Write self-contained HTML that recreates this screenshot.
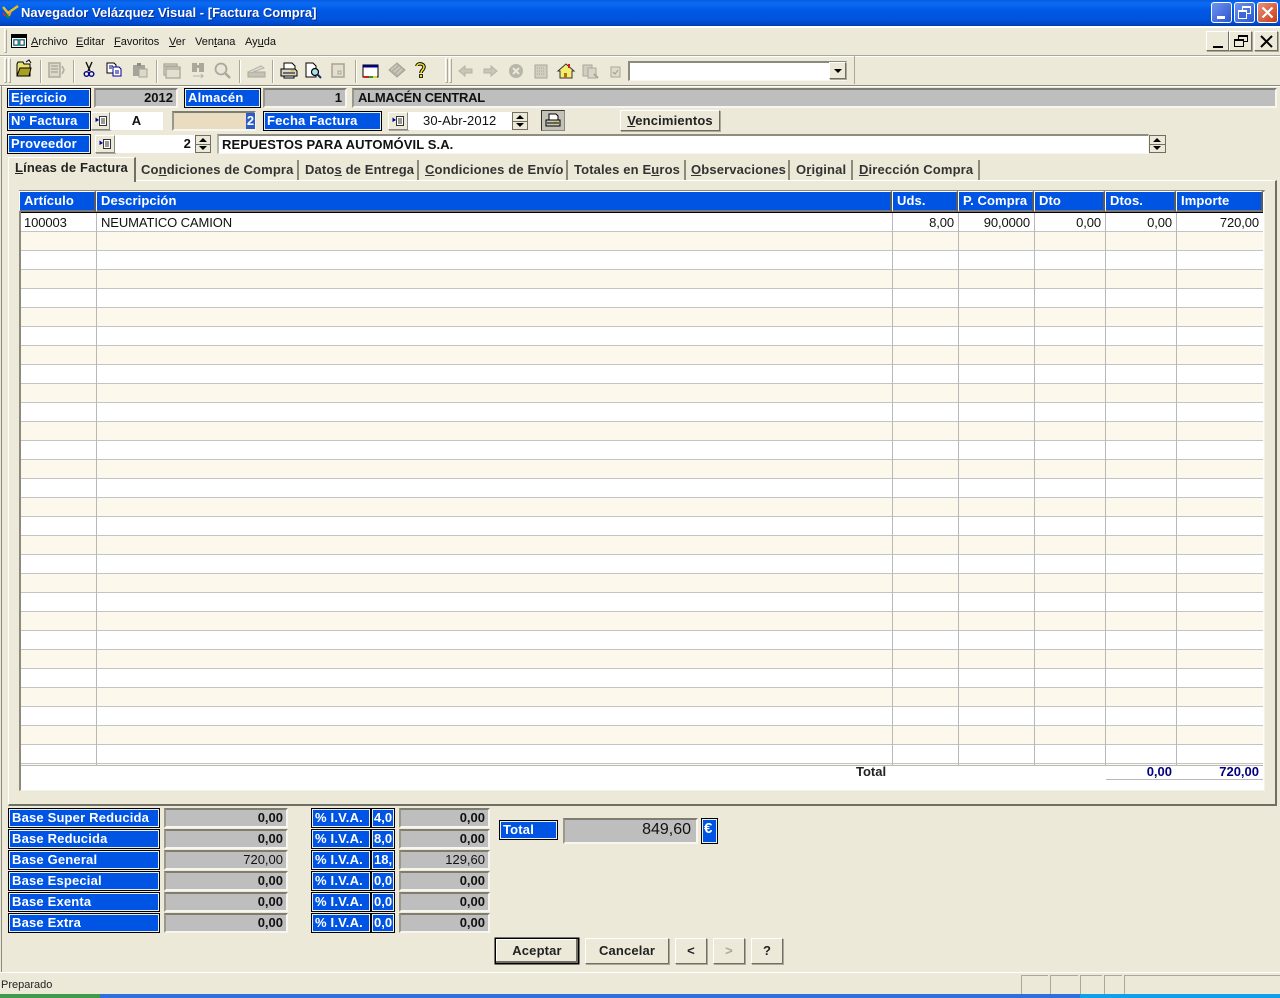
<!DOCTYPE html>
<html lang="es"><head><meta charset="utf-8"><title>Navegador Velázquez Visual</title>
<style>
html,body{margin:0;padding:0}
body{width:1280px;height:998px;position:relative;overflow:hidden;background:#ece9d8;font-family:"Liberation Sans",sans-serif;color:#000}
div,span.a,svg.a{position:absolute;box-sizing:border-box}
.t{white-space:nowrap}
u{text-decoration:underline}
.l{background:#0054e3;border:1px solid #000;box-shadow:inset 0 0 0 1px #e8eefc;color:#fff;font-weight:bold;font-size:13px;letter-spacing:.18px;line-height:18px;padding-left:3px;white-space:nowrap;height:20px}
.g{background:#bebebe;border-top:2px solid #7f7d70;border-left:2px solid #9a988a;border-right:2px solid #f8f6ee;border-bottom:2px solid #f8f6ee;font-weight:bold;font-size:13px;letter-spacing:0;text-align:right;padding-right:3px;line-height:16px;height:20px;white-space:nowrap;color:#111}
.w{background:#fff;border-top:2px solid #8f8d80;border-left:2px solid #b5b3a5;border-right:1px solid #f8f6ee;border-bottom:1px solid #f8f6ee;font-size:13px;letter-spacing:.1px;font-weight:bold;line-height:16px;white-space:nowrap;color:#111}
.b{background:#ece9d8;border:1px solid;border-color:#fff #716f64 #716f64 #fff;box-shadow:1px 1px 0 #aca899;font-weight:bold;font-size:13px;letter-spacing:.15px;text-align:center;white-space:nowrap}
.sp{background:#ece9d8;border:1px solid #716f64}
.sp:before{content:"";position:absolute;left:3px;top:2px;border:4px solid transparent;border-top:0;border-bottom:4px solid #000}
.sp:after{content:"";position:absolute;left:3px;bottom:2px;border:4px solid transparent;border-bottom:0;border-top:4px solid #000}
.sp i{position:absolute;left:0;right:0;top:50%;height:1px;background:#716f64}
.tab{top:160px;height:20px;font-size:13px;font-weight:bold;letter-spacing:.14px;color:#333;line-height:20px;white-space:nowrap;border-right:2px solid #8c8a7d}
.m{top:36px;font-size:11px;line-height:13px;white-space:nowrap;color:#111}
.sep{top:60px;width:2px;height:23px;background:#aca899;border-right:1px solid #fff}
.grip{width:3px;background:#ece9d8;border:1px solid;border-color:#fff #aca899 #aca899 #fff}
.h{top:191px;height:21px;background:#0054e3;color:#fff;font-weight:bold;font-size:13px;letter-spacing:.1px;line-height:18px;padding-left:4px;white-space:nowrap;border-top:1px solid #fff;border-left:1px solid #fff;border-right:2px solid #5a5a5a;border-bottom:2px solid #777}
.c{top:214px;font-size:13px;letter-spacing:-.1px;line-height:17px;color:#111;white-space:nowrap}
.r{text-align:right}
.v{top:213px;height:552px;width:1px;background:#b8b8b8}
.x{position:absolute}
</style></head><body>

<!-- title bar -->
<div style="left:0;top:0;width:1280px;height:26px;background:linear-gradient(180deg,#0a5ae0 0,#0a6cf2 12%,#0058e6 40%,#0053dc 75%,#0047c8 92%,#003aa8 100%)"></div>
<svg class="a" style="left:1px;top:4px" width="20" height="16" viewBox="0 0 20 16"><path d="M2 3 L7 9 L17 2" fill="none" stroke="#e8c020" stroke-width="2.4"/><path d="M2 9l3 3" stroke="#d03020" stroke-width="2"/><path d="M5 11l3 3" stroke="#109030" stroke-width="2"/><path d="M10 7l-2 5" stroke="#f0a020" stroke-width="2"/></svg>
<div class="t" style="left:21px;top:5px;color:#fff;font-weight:bold;font-size:13px;letter-spacing:.02px;line-height:16px;text-shadow:1px 1px 0 #0a2f90">Navegador Velázquez Visual - [Factura Compra]</div>
<!-- window buttons -->
<div style="left:1211px;top:2px;width:21px;height:21px;border:1px solid #fff;border-radius:3px;background:linear-gradient(135deg,#6f94ee,#2a55cf)"><div style="left:5px;top:13px;width:8px;height:3px;background:#fff"></div></div>
<div style="left:1234px;top:2px;width:21px;height:21px;border:1px solid #fff;border-radius:3px;background:linear-gradient(135deg,#6f94ee,#2a55cf)"><div style="left:7px;top:3px;width:9px;height:8px;border:1px solid #fff;border-top-width:2px"></div><div style="left:3px;top:7px;width:9px;height:9px;border:1px solid #fff;border-top-width:2px;background:#3d66d8"></div></div>
<div style="left:1257px;top:2px;width:21px;height:21px;border:1px solid #fff;border-radius:3px;background:linear-gradient(135deg,#e8917a,#c93c16)"><svg class="a" style="left:3px;top:3px" width="13" height="13" viewBox="0 0 13 13"><path d="M1.5 1.5l10 10M11.5 1.5l-10 10" stroke="#fff" stroke-width="2.2"/></svg></div>

<!-- menu bar -->
<div style="left:0;top:26px;width:1280px;height:2px;background:#fff"></div>
<div style="left:0;top:55px;width:1280px;height:1px;background:#aca899"></div>
<div style="left:0;top:56px;width:1280px;height:1px;background:#fff"></div>
<div class="grip" style="left:4px;top:29px;height:24px"></div>
<svg class="a" style="left:11px;top:34px" width="16" height="14" viewBox="0 0 16 14"><rect x=".5" y=".5" width="15" height="13" fill="#fff" stroke="#000"/><rect x="1" y="1" width="14" height="3" fill="#000"/><rect x="2" y="5" width="12" height="7" fill="#30c0c8"/><rect x="3" y="6" width="4" height="5" fill="#fff" stroke="#000" stroke-width=".6"/><rect x="9" y="6" width="4" height="5" fill="#fff" stroke="#000" stroke-width=".6"/></svg>
<div class="m" style="left:31px"><u>A</u>rchivo</div>
<div class="m" style="left:76px"><u>E</u>ditar</div>
<div class="m" style="left:114px"><u>F</u>avoritos</div>
<div class="m" style="left:169px"><u>V</u>er</div>
<div class="m" style="left:195px">Ven<u>t</u>ana</div>
<div class="m" style="left:245px">Ay<u>u</u>da</div>
<!-- MDI buttons -->
<div class="b" style="left:1206px;top:31px;width:23px;height:20px"><div style="left:6px;top:14px;width:10px;height:2px;background:#000"></div></div>
<div class="b" style="left:1229px;top:31px;width:23px;height:20px"><div style="left:8px;top:3px;width:10px;height:7px;border:1px solid #000;border-top-width:2px"></div><div style="left:4px;top:7px;width:10px;height:8px;border:1px solid #000;border-top-width:2px;background:#ece9d8"></div></div>
<div class="b" style="left:1254px;top:31px;width:24px;height:20px"><svg class="a" style="left:5px;top:3px" width="13" height="13" viewBox="0 0 13 13"><path d="M1 1l11 11M12 1L1 12" stroke="#000" stroke-width="2"/></svg></div>

<!-- toolbar -->
<div style="left:0;top:85px;width:1280px;height:1px;background:#8c8a7d"></div>
<div style="left:0;top:86px;width:1280px;height:1px;background:#fff"></div>
<div style="left:1px;top:86px;width:1px;height:886px;background:#8c8a7d"></div>
<div class="grip" style="left:4px;top:58px;height:25px"></div>
<div class="grip" style="left:8px;top:58px;height:25px"></div>
<div class="grip" style="left:445px;top:58px;height:25px"></div>
<div class="grip" style="left:449px;top:58px;height:25px"></div>
<div style="left:854px;top:56px;width:1px;height:28px;background:#aca899"></div>
<div class="sep" style="left:40px"></div><div class="sep" style="left:73px"></div><div class="sep" style="left:156px"></div><div class="sep" style="left:239px"></div><div class="sep" style="left:272px"></div><div class="sep" style="left:355px"></div>
<svg class="a" style="left:0;top:56px" width="640" height="28" viewBox="0 0 640 28">
<!-- open -->
<path d="M17 8l1-2h5l1 2h6v12H17z" fill="#e8e070" stroke="#000"/><path d="M17 20l3-8h11l-2 8z" fill="#a8a020" stroke="#000"/><path d="M26 6l3-2 2 3" fill="none" stroke="#000"/>
<!-- disabled doc -->
<g fill="none" stroke="#b0ae9f" stroke-width="1.6"><rect x="49" y="7" width="11" height="14" fill="#dcd9c8"/><path d="M51 10h7M51 13h7M51 16h7M62 10l2 4-2 4"/></g>
<!-- scissors -->
<path d="M86 6l4 9M92 6l-4 9" stroke="#111" stroke-width="1.4" fill="none"/><circle cx="86.500" cy="18" r="2.300" fill="none" stroke="#000090" stroke-width="1.400"/><circle cx="91.500" cy="18" r="2.300" fill="none" stroke="#000090" stroke-width="1.400"/>
<!-- copy -->
<path d="M107 7h7l2 2v8h-9z" fill="#fff" stroke="#000"/><path d="M113 11h6l2 2v7h-8z" fill="#fff" stroke="#000090"/><path d="M109 10h4M109 12h3M115 15h4M115 17h4" stroke="#000090"/>
<!-- paste disabled -->
<path d="M133 9h12v11h-12z" fill="#a5a39a"/><rect x="137" y="7" width="4" height="3" fill="#8e8c82"/><rect x="139" y="13" width="8" height="8" fill="#dcd9c8" stroke="#a5a39a"/>
<!-- window disabled -->
<g fill="#e2dfcf" stroke="#aca899" stroke-width="1.300"><rect x="164" y="8" width="13" height="11"/><rect x="166" y="11" width="14" height="11"/><path d="M164 10h13M166 13h14"/></g>
<!-- binoculars -->
<g fill="#aca899"><rect x="192" y="7" width="5" height="9"/><rect x="199" y="7" width="5" height="9"/><rect x="196" y="9" width="4" height="3"/></g><path d="M193 20h10l-2-2m2 2l-2 2" stroke="#b5b3a5" fill="none"/>
<!-- magnifier -->
<circle cx="221" cy="13" r="5.500" fill="#e8e6d8" stroke="#aca899" stroke-width="1.800"/><path d="M225 17l5 5" stroke="#aca899" stroke-width="2.400"/>
<!-- scanner -->
<path d="M248 16h17v5h-17z" fill="#c5c3b5" stroke="#aca899"/><path d="M248 16l13-6 3 2-11 4" fill="#ddd" stroke="#b5b3a5"/>
<!-- printer -->
<path d="M284 7h8l3 3v4h-11z" fill="#fff" stroke="#000"/><path d="M281 13h14l2 2v5h-16z" fill="#d8d6c8" stroke="#000"/><path d="M283 17h12M284 20h10v2h-10z" stroke="#000" fill="#fff"/><rect x="291" y="14" width="3" height="1.500" fill="#e8c020"/>
<!-- preview -->
<path d="M306 7h7l3 3v11h-10z" fill="#fff" stroke="#000"/><circle cx="315" cy="16" r="3.500" fill="#a8e0f0" stroke="#000" stroke-width="1.200"/><path d="M317.500 18.500l3.500 3.500" stroke="#103060" stroke-width="2"/>
<!-- disabled square -->
<rect x="332" y="8" width="12" height="13" fill="#e2dfcf" stroke="#aca899" stroke-width="1.600"/><rect x="338" y="15" width="3" height="3" fill="none" stroke="#aca899"/>
<!-- monitor -->
<rect x="363" y="9" width="15" height="12" fill="#fff" stroke="#000"/><rect x="363" y="9" width="15" height="2.500" fill="#000080"/><rect x="364" y="20" width="5" height="2" fill="#d02020"/><rect x="369" y="20" width="4" height="2" fill="#20a030"/><rect x="373" y="20" width="4" height="2" fill="#e0d020"/>
<!-- diamond -->
<path d="M397 7l8 7-8 7-8-7z" fill="#b5b3a5" stroke="#a5a395"/><path d="M391 14l6-5M394 16l6-5M397 18l5-5" stroke="#d6d4c6"/>
<!-- help -->
<path d="M417 10c0-3 7-3 7 1 0 3-3 3-3 6" fill="none" stroke="#000" stroke-width="3.400"/><path d="M417 10c0-3 7-3 7 1 0 3-3 3-3 6" fill="none" stroke="#f0e020" stroke-width="1.600"/><rect x="419.500" y="18.500" width="3" height="3" fill="#f0e020" stroke="#000" stroke-width=".8"/>
<!-- nav -->
<path d="M459 15l6-5v3h7v4h-7v3z" fill="#c8c6b8" stroke="#b5b3a5"/>
<path d="M497 15l-6-5v3h-7v4h7v3z" fill="#c8c6b8" stroke="#b5b3a5"/>
<circle cx="516" cy="15" r="7" fill="#b8b6a8"/><path d="M513 12l6 6M519 12l-6 6" stroke="#ece9d8" stroke-width="2"/>
<rect x="535" y="9" width="12" height="13" fill="#d0cebf" stroke="#aca899"/><path d="M537 12h8M537 15h8M537 18h8" stroke="#aca899" stroke-dasharray="1 1"/>
<path d="M558 15l8-7 8 7h-2v7h-12v-7z" fill="#f4ee70" stroke="#333"/><rect x="564" y="17" width="3" height="5" fill="#b07020"/><path d="M569 8v4" stroke="#d02020" stroke-width="2"/>
<rect x="583" y="9" width="9" height="11" fill="#d0cebf" stroke="#aca899"/><rect x="588" y="12" width="8" height="10" fill="#d8d6c8" stroke="#aca899"/><path d="M594 18l4 4" stroke="#aca899" stroke-width="2"/>
<rect x="611" y="11" width="9" height="10" fill="#dedbca" stroke="#aca899"/><path d="M613 16l2 2 3-4" stroke="#9a988a" fill="none"/>
</svg>
<div style="left:628px;top:61px;width:219px;height:20px;background:#fff;border-top:2px solid #8c8a7d;border-left:2px solid #8c8a7d;border-right:1px solid #f8f6ee;border-bottom:1px solid #f8f6ee"></div>
<div class="b" style="left:829px;top:62px;width:17px;height:17px"><div style="left:4px;top:6px;border:4px solid transparent;border-bottom:0;border-top:4px solid #000"></div></div>

<!-- row 1 -->
<div class="l" style="left:7px;top:88px;width:84px">Ejercicio</div>
<div class="g" style="left:94px;top:88px;width:84px">2012</div>
<div class="l" style="left:184px;top:88px;width:77px">Almacén</div>
<div class="g" style="left:263px;top:88px;width:84px">1</div>
<div class="g" style="left:352px;top:88px;width:925px;text-align:left;padding-left:4px;font-weight:bold;letter-spacing:-.25px">ALMACÉN CENTRAL</div>

<!-- row 2 -->
<div class="l" style="left:7px;top:111px;width:84px">Nº Factura</div>
<div class="b" style="left:91px;top:112px;width:19px;height:18px;border-color:#fff #888 #888 #fff"></div>
<svg class="a" style="left:95px;top:115px" width="12" height="12" viewBox="0 0 12 12"><path d="M4.500 1.500h7v9h-7z" fill="#fff" stroke="#333"/><path d="M6 4h4M6 6h4M6 8h4" stroke="#333"/><path d="M.500 2.500l3.500 2.500-3.500 2z" fill="#000090"/></svg>
<div class="w" style="left:110px;top:112px;width:53px;height:18px;border:0;text-align:center;line-height:18px;padding-right:0;font-size:13px;background:#fff;font-weight:bold">A</div>
<div class="g" style="left:172px;top:111px;width:84px;background:#e9dcc0"></div>
<div class="t" style="left:246px;top:113px;width:9px;height:16px;background:#2c5cc8;color:#fff;font-weight:bold;font-size:13px;line-height:16px;text-align:center">2</div>
<div class="l" style="left:263px;top:111px;width:119px;padding-left:3px">Fecha Factura</div>
<div class="b" style="left:388px;top:112px;width:20px;height:18px;border-color:#fff #888 #888 #fff"></div>
<svg class="a" style="left:392px;top:115px" width="12" height="12" viewBox="0 0 12 12"><path d="M4.500 1.500h7v9h-7z" fill="#fff" stroke="#333"/><path d="M6 4h4M6 6h4M6 8h4" stroke="#333"/><path d="M.500 2.500l3.500 2.500-3.500 2z" fill="#000090"/></svg>
<div class="w" style="left:408px;top:112px;width:104px;height:18px;border:0;line-height:18px;padding-left:15px;font-weight:normal;letter-spacing:.1px">30-Abr-2012</div>
<div class="sp" style="left:512px;top:112px;width:16px;height:18px"><i></i></div>
<div style="left:541px;top:110px;width:24px;height:21px;background:#c4c2b6;border:1px solid #333;border-right-color:#888;border-bottom-color:#888"></div>
<svg class="a" style="left:544px;top:112px" width="18" height="17" viewBox="0 0 18 17"><path d="M5 2h7l2 2v4H5z" fill="#fff" stroke="#000"/><path d="M2 8h14v6H2z" fill="#c8c6b8" stroke="#000"/><path d="M3 11h12M4 14h10" stroke="#000"/><rect x="10" y="9" width="3" height="1.500" fill="#e8c020"/></svg>
<div class="b" style="left:620px;top:110px;width:100px;height:21px;line-height:19px;color:#222"><u>V</u>encimientos</div>

<!-- row 3 -->
<div class="l" style="left:7px;top:134px;width:84px">Proveedor</div>
<div class="b" style="left:95px;top:135px;width:20px;height:18px;border-color:#fff #888 #888 #fff"></div>
<svg class="a" style="left:99px;top:138px" width="12" height="12" viewBox="0 0 12 12"><path d="M4.500 1.500h7v9h-7z" fill="#fff" stroke="#333"/><path d="M6 4h4M6 6h4M6 8h4" stroke="#333"/><path d="M.500 2.500l3.500 2.500-3.500 2z" fill="#000090"/></svg>
<div class="w" style="left:115px;top:135px;width:80px;height:18px;border:0;text-align:right;padding-right:4px;line-height:18px;font-weight:bold">2</div>
<div class="sp" style="left:195px;top:135px;width:16px;height:18px"><i></i></div>
<div class="w" style="left:217px;top:134px;width:932px;height:20px;padding-left:3px;line-height:17px;font-weight:bold">REPUESTOS PARA AUTOMÓVIL S.A.</div>
<div class="sp" style="left:1149px;top:135px;width:17px;height:18px"><i></i></div>

<!-- tabs -->
<div style="left:8px;top:180px;width:1269px;height:626px;background:#ece9d8;border:1px solid;border-color:#fff #716f64 #716f64 #fff;border-width:1px 2px 2px 1px"></div>
<div style="left:8px;top:157px;width:128px;height:25px;background:#ece9d8;border-top:1px solid #fff;border-left:1px solid #fff;border-right:2px solid #716f64"></div>
<div class="tab" style="left:15px;top:158px;color:#222;border:0"><u>L</u>íneas de Factura</div>
<div class="tab" style="left:141px;width:158px">Co<u>n</u>diciones de Compra</div>
<div class="tab" style="left:305px;width:114px">Dato<u>s</u> de Entrega</div>
<div class="tab" style="left:425px;width:143px"><u>C</u>ondiciones de Envío</div>
<div class="tab" style="left:574px;width:112px">Totales en E<u>u</u>ros</div>
<div class="tab" style="left:691px;width:99px"><u>O</u>bservaciones</div>
<div class="tab" style="left:796px;width:57px">O<u>r</u>iginal</div>
<div class="tab" style="left:859px;width:121px"><u>D</u>irección Compra</div>

<!-- grid -->
<div style="left:19px;top:190px;width:1246px;height:601px;background:#fff;border-top:2px solid #8c8a7d;border-left:2px solid #8c8a7d;border-right:1px solid #f4f2e8;border-bottom:1px solid #f4f2e8"></div>
<div style="left:21px;top:213px;width:1242px;height:552px;background:repeating-linear-gradient(180deg,#fff 0,#fff 18px,#c4c4c4 18px,#c4c4c4 19px,#fdf8ec 19px,#fdf8ec 37px,#c4c4c4 37px,#c4c4c4 38px)"></div>
<div style="left:21px;top:212px;width:1242px;height:1px;background:#000"></div>
<div class="v" style="left:96px"></div><div class="v" style="left:892px"></div><div class="v" style="left:958px"></div><div class="v" style="left:1034px"></div><div class="v" style="left:1105px"></div><div class="v" style="left:1176px"></div>
<div class="h" style="left:19px;width:77px;padding-left:4px">Artículo</div>
<div class="h" style="left:96px;width:796px;padding-left:4px">Descripción</div>
<div class="h" style="left:892px;width:66px">Uds.</div>
<div class="h" style="left:958px;width:76px">P. Compra</div>
<div class="h" style="left:1034px;width:71px">Dto</div>
<div class="h" style="left:1105px;width:71px">Dtos.</div>
<div class="h" style="left:1176px;width:87px">Importe</div>
<div class="c" style="left:24px">100003</div>
<div class="c" style="left:101px">NEUMATICO CAMION</div>
<div class="c r" style="left:892px;width:62px">8,00</div>
<div class="c r" style="left:958px;width:72px">90,0000</div>
<div class="c r" style="left:1034px;width:67px">0,00</div>
<div class="c r" style="left:1105px;width:67px">0,00</div>
<div class="c r" style="left:1176px;width:83px">720,00</div>
<div style="left:21px;top:765px;width:1242px;height:1px;background:#b8b8b8"></div>
<div style="left:1106px;top:779px;width:157px;height:1px;background:#b8b8b8"></div>
<div class="t" style="left:856px;top:765px;font-weight:bold;font-size:13px;line-height:14px;color:#222">Total</div>
<div class="t r" style="left:1106px;top:765px;width:66px;font-weight:bold;font-size:13px;line-height:14px;color:#000080">0,00</div>
<div class="t r" style="left:1177px;top:765px;width:82px;font-weight:bold;font-size:13px;line-height:14px;color:#000080">720,00</div>

<!-- bases -->
<div class="l" style="left:8px;top:808px;width:152px">Base Super Reducida</div>
<div class="l" style="left:8px;top:829px;width:152px">Base Reducida</div>
<div class="l" style="left:8px;top:850px;width:152px">Base General</div>
<div class="l" style="left:8px;top:871px;width:152px">Base Especial</div>
<div class="l" style="left:8px;top:892px;width:152px">Base Exenta</div>
<div class="l" style="left:8px;top:913px;width:152px">Base Extra</div>
<div class="g" style="left:164px;top:808px;width:124px">0,00</div>
<div class="g" style="left:164px;top:829px;width:124px">0,00</div>
<div class="g" style="left:164px;top:850px;width:124px;font-weight:normal">720,00</div>
<div class="g" style="left:164px;top:871px;width:124px">0,00</div>
<div class="g" style="left:164px;top:892px;width:124px">0,00</div>
<div class="g" style="left:164px;top:913px;width:124px">0,00</div>
<div class="l" style="left:311px;top:808px;width:60px">% I.V.A.</div>
<div class="l" style="left:311px;top:829px;width:60px">% I.V.A.</div>
<div class="l" style="left:311px;top:850px;width:60px">% I.V.A.</div>
<div class="l" style="left:311px;top:871px;width:60px">% I.V.A.</div>
<div class="l" style="left:311px;top:892px;width:60px">% I.V.A.</div>
<div class="l" style="left:311px;top:913px;width:60px">% I.V.A.</div>
<div class="l" style="left:371px;top:808px;width:24px;padding-left:2px;letter-spacing:0;overflow:hidden">4,0</div>
<div class="l" style="left:371px;top:829px;width:24px;padding-left:2px;letter-spacing:0;overflow:hidden">8,0</div>
<div class="l" style="left:371px;top:850px;width:24px;padding-left:2px;letter-spacing:0;overflow:hidden">18,</div>
<div class="l" style="left:371px;top:871px;width:24px;padding-left:2px;letter-spacing:0;overflow:hidden">0,0</div>
<div class="l" style="left:371px;top:892px;width:24px;padding-left:2px;letter-spacing:0;overflow:hidden">0,0</div>
<div class="l" style="left:371px;top:913px;width:24px;padding-left:2px;letter-spacing:0;overflow:hidden">0,0</div>
<div class="g" style="left:399px;top:808px;width:91px">0,00</div>
<div class="g" style="left:399px;top:829px;width:91px">0,00</div>
<div class="g" style="left:399px;top:850px;width:91px;font-weight:normal">129,60</div>
<div class="g" style="left:399px;top:871px;width:91px">0,00</div>
<div class="g" style="left:399px;top:892px;width:91px">0,00</div>
<div class="g" style="left:399px;top:913px;width:91px">0,00</div>

<!-- total -->
<div class="l" style="left:499px;top:820px;width:59px">Total</div>
<div class="g" style="left:563px;top:818px;width:135px;height:26px;font-size:16px;font-weight:normal;letter-spacing:0;line-height:19px;padding-right:5px">849,60</div>
<div class="l" style="left:701px;top:818px;width:17px;height:26px;padding-left:2px;font-size:15px;line-height:20px;letter-spacing:0">€</div>

<!-- buttons -->
<div class="b" style="left:495px;top:938px;width:84px;height:26px;border:1px solid #000;box-shadow:inset -2px -2px 0 #716f64,inset 1px 1px 0 #fff,0 0 0 .5px #000;line-height:24px;color:#222">Aceptar</div>
<div class="b" style="left:585px;top:938px;width:84px;height:26px;line-height:24px;color:#222">Cancelar</div>
<div class="b" style="left:675px;top:938px;width:32px;height:26px;line-height:24px;color:#222">&lt;</div>
<div class="b" style="left:713px;top:938px;width:32px;height:26px;line-height:24px;color:#aca899">&gt;</div>
<div class="b" style="left:751px;top:938px;width:32px;height:26px;line-height:24px;color:#222">?</div>

<!-- status bar -->
<div style="left:0;top:972px;width:1280px;height:1px;background:#fff"></div>
<div class="t" style="left:1px;top:978px;font-size:11px;line-height:14px;color:#222">Preparado</div>
<div style="left:1021px;top:975px;width:27px;height:19px;border-top:1px solid #aca899;border-left:1px solid #aca899"></div>
<div style="left:1050px;top:975px;width:28px;height:19px;border-top:1px solid #aca899;border-left:1px solid #aca899"></div>
<div style="left:1080px;top:975px;width:22px;height:19px;border-top:1px solid #aca899;border-left:1px solid #aca899"></div>
<div style="left:1104px;top:975px;width:18px;height:19px;border-top:1px solid #aca899;border-left:1px solid #aca899"></div>
<div style="left:1124px;top:975px;width:156px;height:19px;border-top:1px solid #aca899;border-left:1px solid #aca899"></div>
<!-- taskbar -->
<div style="left:0;top:994px;width:1280px;height:4px;background:#2f6fdc"></div>
<div style="left:0;top:994px;width:100px;height:4px;background:#3f9a4a"></div>
<div style="left:1080px;top:994px;width:200px;height:4px;background:#10a0e8"></div>
</body></html>
